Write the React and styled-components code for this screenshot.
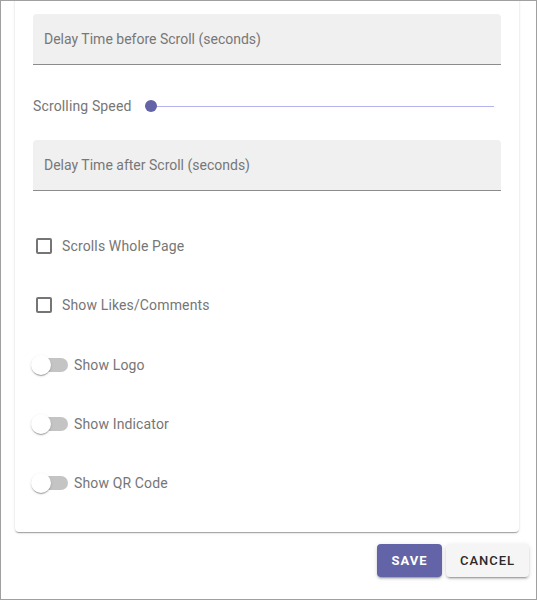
import React from "react";
import styled, { createGlobalStyle } from "styled-components";

const Global = createGlobalStyle`
  html, body { margin: 0; padding: 0; background: #fff; }
  body { font-family: Roboto, "Liberation Sans", Arial, sans-serif; }
  * { box-sizing: border-box; }
`;

const Frame = styled.div`
  width: 537px;
  height: 600px;
  border: 1px solid #a0a0a0;
  overflow: hidden;
  background: #fff;
  display: flex;
  flex-direction: column;
`;

const Card = styled.div`
  margin: -8px 17px 0 14px;
  padding: 21px 18px 29px 18px;
  background: #fff;
  border-radius: 4px;
  box-shadow: 0 2px 1px -1px rgba(0,0,0,.2), 0 1px 1px 0 rgba(0,0,0,.14), 0 1px 3px 0 rgba(0,0,0,.12);
  display: flex;
  flex-direction: column;
`;

const Field = styled.div`
  height: 51px;
  background: #f0f0f0;
  border-radius: 4px 4px 0 0;
  border-bottom: 1px solid #8c8c8c;
  display: flex;
  align-items: center;
  padding: 0 11px;
  font-size: 14px;
  color: #777;
`;

const SliderRow = styled.div`
  height: 30px;
  margin: 26px 0 19px;
  display: flex;
  align-items: center;
`;

const Label = styled.span`
  font-size: 14px;
  letter-spacing: 0.14px;
  color: #767676;
  white-space: nowrap;
`;

const Slider = styled.div`
  flex: 1;
  margin: 0 7px 0 13px;
  height: 12px;
  position: relative;
  display: flex;
  align-items: center;
`;

const Track = styled.div`
  flex: 1;
  height: 1px;
  background: #b3b3f0;
`;

const Thumb = styled.div`
  position: absolute;
  left: 0;
  top: 0;
  width: 12px;
  height: 12px;
  border-radius: 50%;
  background: #6264a7;
`;

const Options = styled.div`
  display: flex;
  flex-direction: column;
  gap: 19px;
  margin-top: 35px;
`;

const OptionRow = styled.label`
  height: 40px;
  display: flex;
  align-items: center;
  margin-top: ${(p) => (p.$extra ? "1px" : "0")};
`;

const Box = styled.span`
  width: 16px;
  height: 16px;
  border: 2px solid #757575;
  border-radius: 2px;
  margin: 0 10px 0 3px;
  flex: none;
`;

const Switch = styled.span`
  position: relative;
  width: 34px;
  height: 14px;
  margin: 0 6px 0 1px;
  border-radius: 7px;
  background: #c4c4c4;
  flex: none;
`;

const Knob = styled.span`
  position: absolute;
  left: -3px;
  top: -3px;
  width: 20px;
  height: 20px;
  border-radius: 50%;
  background: #fff;
  box-shadow: 0 2px 1px -1px rgba(0,0,0,.2), 0 1px 1px 0 rgba(0,0,0,.14), 0 1px 3px 0 rgba(0,0,0,.12);
`;

const Actions = styled.div`
  display: flex;
  justify-content: flex-end;
  gap: 4px;
  margin: 12px 7px 0 0;
`;

const Button = styled.button`
  height: 33px;
  padding: 0;
  width: ${(p) => (p.$primary ? "65px" : "83px")};
  border: none;
  border-radius: 4px;
  font-family: Roboto, "Liberation Sans", Arial, sans-serif;
  font-size: 13px;
  font-weight: ${(p) => (p.$primary ? 700 : 500)};
  letter-spacing: 1px;
  text-transform: uppercase;
  background: ${(p) => (p.$primary ? "#6264a7" : "#f5f5f5")};
  color: ${(p) => (p.$primary ? "#fff" : "#2a2a2a")};
  box-shadow: 0 3px 1px -2px rgba(0,0,0,.2), 0 2px 2px 0 rgba(0,0,0,.14), 0 1px 5px 0 rgba(0,0,0,.12);
`;

const checks = ["Scrolls Whole Page", "Show Likes/Comments"];
const toggles = ["Show Logo", "Show Indicator", "Show QR Code"];

export default function App() {
  return (
    <>
      <Global />
      <Frame>
        <Card>
          <Field>Delay Time before Scroll (seconds)</Field>
          <SliderRow>
            <Label>Scrolling Speed</Label>
            <Slider>
              <Track />
              <Thumb />
            </Slider>
          </SliderRow>
          <Field>Delay Time after Scroll (seconds)</Field>
          <Options>
            {checks.map((c) => (
              <OptionRow key={c}>
                <Box />
                <Label>{c}</Label>
              </OptionRow>
            ))}
            {toggles.map((t, i) => (
              <OptionRow key={t} $extra={i === 0}>
                <Switch>
                  <Knob />
                </Switch>
                <Label>{t}</Label>
              </OptionRow>
            ))}
          </Options>
        </Card>
        <Actions>
          <Button $primary>Save</Button>
          <Button>Cancel</Button>
        </Actions>
      </Frame>
    </>
  );
}
